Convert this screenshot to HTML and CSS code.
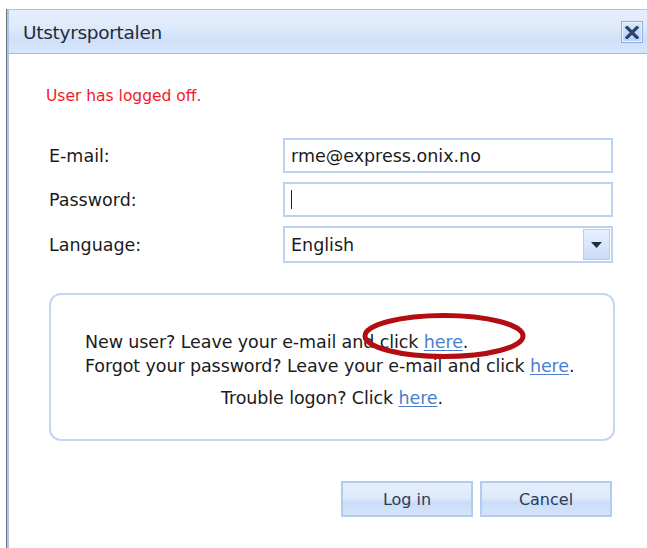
FILE: index.html
```html
<!DOCTYPE html>
<html lang="en">
<head>
<meta charset="utf-8">
<title>Utstyrsportalen</title>
<link rel="stylesheet" href="styles.css">
</head>
<body>
<div class="screen">
  <div class="dialog">
    <div class="titlebar">
      <span class="title">Utstyrsportalen</span>
      <button class="close" aria-label="Close">
        <svg width="14" height="13" viewBox="0 0 14 13"><path d="M2 1.5 L12 11.5 M12 1.5 L2 11.5" stroke="#2a4470" stroke-width="3.2" stroke-linecap="square"/></svg>
      </button>
    </div>
    <div class="content">
      <p class="status">User has logged off.</p>
      <div class="form">
        <label class="label" for="email">E-mail:</label>
        <div class="field"><input id="email" class="input" type="text" value="rme@express.onix.no"></div>
        <label class="label" for="pwd">Password:</label>
        <div class="field"><span class="input caret-field"><span class="caret"></span></span></div>
        <label class="label" for="lang">Language:</label>
        <div class="field select">
          <span class="input select-value">English</span>
          <span class="select-btn"><svg width="11" height="6" viewBox="0 0 11 6"><path d="M0 0 H11 L5.5 6 Z" fill="#1f2d45"/></svg></span>
        </div>
      </div>
      <div class="help">
        <div class="help-lines">
          <p class="line">New user? Leave your e-mail and click <a href="#">here</a>.</p>
          <p class="line">Forgot your password? Leave your e-mail and click <a href="#">here</a>.</p>
        </div>
        <p class="line centered">Trouble logon? Click <a href="#">here</a>.</p>
        <svg class="mark" width="170" height="52" viewBox="0 0 170 52"><ellipse cx="85" cy="26" rx="79" ry="20.5" fill="none" stroke="#b30d12" stroke-width="5"/></svg>
      </div>
      <div class="actions">
        <button class="btn">Log in</button>
        <button class="btn">Cancel</button>
      </div>
    </div>
  </div>
</div>
</body>
</html>
```

FILE: styles.css
```css
html, body {
  margin: 0;
  padding: 0;
  background: #ffffff;
}

body {
  font-family: "DejaVu Sans", Verdana, sans-serif;
  color: #1b1b1b;
  width: 647px;
  height: 548px;
  overflow: hidden;
}

.screen {
  padding: 9px 0 0 6px;
  height: 539px;
}

.dialog {
  border-left: 1px solid #6f7378;
  height: 100%;
  box-sizing: border-box;
}

.dialog > * {
  border-left: 2px solid #a8c5f0;
}

.titlebar {
  height: 43px;
  border-top: 1px solid #a9c4ec;
  border-bottom: 1px solid #9dbdeb;
  background: linear-gradient(#e6effd 0%, #dde9fb 45%, #cfe0f8 70%, #d9e6fa 100%);
  display: flex;
  align-items: center;
  justify-content: space-between;
  padding: 0 4px 0 14px;
}

.title {
  font-size: 18.5px;
  color: #1f2a3c;
  letter-spacing: -0.3px;
  margin-top: 2px;
}

.close {
  width: 22px;
  height: 22px;
  padding: 0;
  margin-top: 1px;
  border: 1px solid #8cadde;
  background: linear-gradient(#dbe8fb, #b9d0f3);
  display: flex;
  align-items: center;
  justify-content: center;
  box-shadow: inset 0 0 0 1px #eef4fe;
}

.content {
  height: 494px;
  box-sizing: border-box;
  padding: 0;
}

.status {
  margin: 0;
  padding: 32px 0 0 37px;
  font-size: 15.5px;
  line-height: 20px;
  color: #f41a26;
}

.form {
  display: grid;
  grid-template-columns: 236px 330px;
  row-gap: 9px;
  margin: 32px 0 0 38px;
  align-items: center;
}

.label {
  font-size: 17.5px;
  padding-left: 2px;
}

.field {
  height: 35px;
  position: relative;
  display: flex;
}

.input {
  box-sizing: border-box;
  width: 100%;
  height: 100%;
  border: 2px solid #bcd2f4;
  outline: none;
  background: #fff;
  font-family: inherit;
  font-size: 17.5px;
  color: #1b1b1b;
  padding: 0 0 0 6px;
  display: flex;
  align-items: center;
  margin: 0;
}

.caret {
  display: block;
  width: 1px;
  height: 19px;
  background: #222;
}

.select {
  height: 37px;
}

.select-btn {
  position: absolute;
  right: 3px;
  top: 3px;
  width: 27px;
  height: 31px;
  box-sizing: border-box;
  border: 1px solid #b4cdf2;
  background: linear-gradient(#e7f0fd, #c9dcf7);
  display: flex;
  align-items: center;
  justify-content: center;
}

.help {
  position: relative;
  margin: 30px 0 0 40px;
  width: 566px;
  height: 148px;
  box-sizing: border-box;
  border: 2px solid #c3d7f5;
  border-radius: 12px;
  padding: 35px 0 0 34px;
}

.line {
  margin: 0;
  font-size: 17.5px;
  line-height: 24px;
  letter-spacing: -0.1px;
}

.centered {
  margin-top: 8px;
  text-align: center;
  padding-right: 34px;
}

.line a {
  color: #4a7fcf;
  text-decoration: underline;
  text-underline-offset: 2px;
}

.mark {
  position: absolute;
  left: 308px;
  top: 15px;
}

.actions {
  display: flex;
  gap: 7px;
  margin: 40px 0 0 332px;
}

.btn {
  width: 132px;
  height: 36px;
  border: 2px solid #b2ccf1;
  background: linear-gradient(#e6effd 0%, #dde8fb 50%, #c9dcf8 60%, #d6e4fa 100%);
  font-family: inherit;
  font-size: 16px;
  color: #2b3b58;
  padding: 0;
}
```
